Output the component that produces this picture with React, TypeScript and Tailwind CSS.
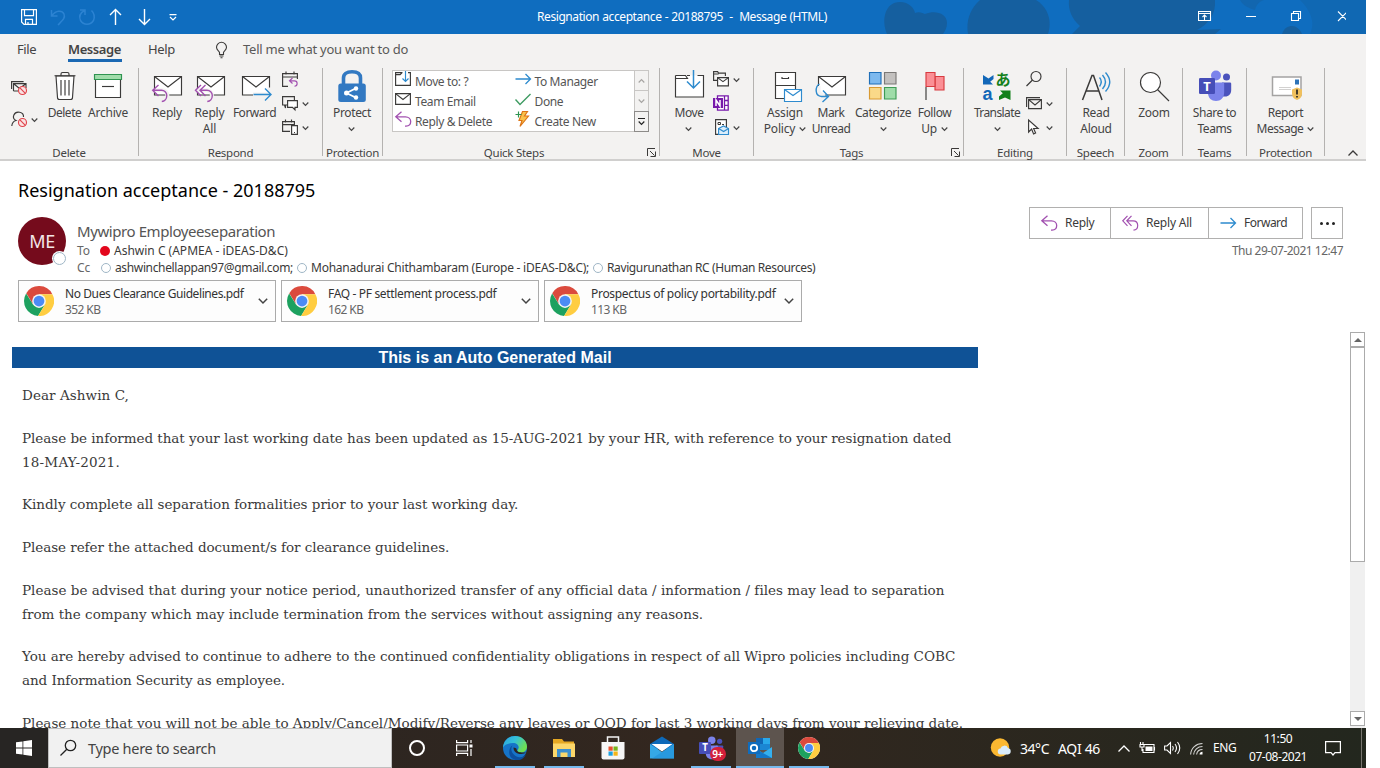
import type { ReactNode } from 'react';

const INK = '#3b3a39';
const BLUE = '#2e8bce';
const PURPLE = '#a251b0';

type IconProps = { children: ReactNode; size?: string; box?: string };

function Ico({ children, size = 'h-8 w-8', box = '0 0 32 32' }: IconProps) {
  return (
    <svg className={`block shrink-0 overflow-visible ${size}`} viewBox={box} fill="none" stroke={INK} strokeWidth="1.15">
      {children}
    </svg>
  );
}

function Chevron({ className = '' }: { className?: string }) {
  return (
    <svg className={`inline-block h-[4px] w-[7px] shrink-0 overflow-visible ${className}`} viewBox="0 0 7 4" fill="none" stroke="currentColor" strokeWidth="1.2">
      <path d="M.7.5 3.5 3.3 6.3.5" />
    </svg>
  );
}

function Group({ width, label, launcher, children }: { width: string; label: string; launcher?: boolean; children: ReactNode }) {
  return (
    <div className={`flex h-[88px] shrink-0 flex-col border-r border-[#b4b2b0] ${width}`}>
      <div className="flex h-[78px] shrink-0 items-start">{children}</div>
      <div className="flex h-[12px] shrink-0 items-center">
        <div className={`flex-1 whitespace-nowrap text-center text-[11.5px] leading-[13px] tracking-[-0.27px] ${launcher ? '-translate-x-px' : ''}`}>{label}</div>
        {launcher && (
          <svg className="mr-[3px] h-[9px] w-[9px] shrink-0" viewBox="0 0 9 9" fill="none" stroke={INK}>
            <path d="M.5 8V.5H8M3 3l4.500 4.500M8.500 3.500v5h-5" />
          </svg>
        )}
      </div>
    </div>
  );
}

function Big({ width, icon, lines, chevron, track = 'tracking-[-0.4px]' }: { width: string; icon: ReactNode; lines: string[]; chevron?: 'below' | 'inline'; track?: string }) {
  return (
    <div className={`flex shrink-0 flex-col items-center pt-[2px] ${width}`}>
      {icon}
      <div className={`mt-[3px] flex flex-col items-center whitespace-nowrap text-[12px] leading-4 ${track}`}>
        {lines.map((line, i) => (
          <div key={line} className="flex items-center">
            {line}
            {chevron === 'inline' && i === lines.length - 1 && <Chevron className="ml-[4px]" />}
          </div>
        ))}
        {chevron === 'below' && <Chevron className="mt-[6px]" />}
      </div>
    </div>
  );
}

const TrashIcon = () => (
  <Ico>
    <path fill="#fff" d="M7 6h18l-1.500 21.500a2 2 0 0 1-2 2h-11a2 2 0 0 1-2-2z" />
    <path d="M5.500 5.700h21M12 5.500V4a1.500 1.500 0 0 1 1.500-1.500h5A1.500 1.500 0 0 1 20 4v1.500M12 10v15.500M16 10v15.500M20 10v15.500" />
  </Ico>
);

const ArchiveIcon = () => (
  <Ico>
    <path fill="#fff" d="M3.500 9.500h25v18h-25z" />
    <path fill="#a0dcaa" stroke="#2f9350" d="M2.500 4.500h27v5h-27z" />
    <path d="M10 16.500h12" />
  </Ico>
);

const EnvelopeShape = () => (
  <>
    <path fill="#fff" d="M3.500 6.500h27v18.500h-27z" />
    <path d="m3.500 6.500 13.500 10.500L30.500 6.500" />
  </>
);

const ReplyIcon = () => (
  <Ico>
    <EnvelopeShape />
    <path stroke="#f3f2f1" strokeWidth="4" d="M1.800 20.200h9.500a5 5 0 0 1 5 5v1" />
    <path stroke={PURPLE} strokeWidth="1.400" d="m7.500 15-5.800 5.300L7.500 26M2 20.300h8.500a5.300 5.300 0 0 1 5.300 5.300c0 3.300-2.300 5.600-5 5.900" />
  </Ico>
);

const ReplyAllIcon = () => (
  <Ico>
    <EnvelopeShape />
    <path stroke="#f3f2f1" strokeWidth="4" d="M1.800 20.200h11a5 5 0 0 1 5 5v1" />
    <path stroke={PURPLE} strokeWidth="1.400" d="m7 15-5.500 5.300L7 26M11.500 15 6 20.300l5.500 5.700M6.300 20.300h6.700a5.300 5.300 0 0 1 5.300 5.300c0 3.300-2.300 5.600-5 5.900" />
  </Ico>
);

const ForwardIcon = () => (
  <Ico>
    <EnvelopeShape />
    <path stroke="#f3f2f1" strokeWidth="4" d="M14 24.500h16.500v-7" />
    <path stroke={BLUE} strokeWidth="1.400" d="M14.500 24.500h17.500M26 18.500l6 6-6 6" />
  </Ico>
);

const LockIcon = () => (
  <Ico>
    <path stroke="#3279c2" strokeWidth="3.600" d="M7.500 14V8c0-4 3-6.200 8.500-6.200S24.500 4 24.500 8v6" />
    <rect x="2.300" y="13.500" width="27.500" height="18.500" rx="2.500" fill="#3279c2" stroke="none" />
    <path stroke="#fff" strokeWidth="1.800" d="m19.500 18.500-9 4.500 9 4.500" />
    <g fill="#fff" stroke="none">
      <circle cx="20" cy="18.500" r="2.200" />
      <circle cx="10.500" cy="23" r="2.500" />
      <circle cx="20" cy="27.500" r="2.200" />
    </g>
  </Ico>
);

const MoveIcon = () => (
  <Ico>
    <path fill="#fff" stroke="none" d="M2.500 5.500h28v21.500h-28z" />
    <path d="M2.500 5.500V27h28V5.500h-6M2.500 5.500h10l2 3h-12M14 5.500h3" />
    <path stroke={BLUE} strokeWidth="1.500" d="M20.500 0v18M14 11.500l6.500 6.500 6.500-6.500" />
  </Ico>
);

const AssignIcon = () => (
  <Ico>
    <path fill="#fff" d="M6.500 2.500h20v26h-20z" />
    <path d="M6.500 15.500h20M13 7v1.500h6.500V7" />
    <path fill="#fff" stroke={BLUE} d="M15.500 19.500h17v12h-17z" />
    <path stroke={BLUE} d="m15.500 19.500 8.500 6 8.500-6" />
  </Ico>
);

const UnreadIcon = () => (
  <Ico>
    <EnvelopeShape />
    <path stroke="#f3f2f1" strokeWidth="4" d="M3.500 16v6.500l6 4" />
    <path stroke={BLUE} strokeWidth="1.400" d="M4.500 14C0 16.500-.5 26 6.500 26.500H13M8 20.500l5.500 6L7.500 32" />
  </Ico>
);

const CategorizeIcon = () => (
  <Ico>
    <path fill="#7db9ee" stroke="#1f6fb8" d="M2.500 2.500H14V14H2.500z" />
    <path fill="#c3c1bf" stroke="#7b7977" d="M17.500 2.500H29V14H17.500z" />
    <path fill="#fad989" stroke="#d99a32" d="M2.500 17.500H14V29H2.500z" />
    <path fill="#9fdca9" stroke="#3f9b55" d="M17.500 17.500H29V29H17.500z" />
  </Ico>
);

const FlagIcon = () => (
  <Ico>
    <path fill="#fb8f95" stroke="#d83b41" d="M16 6.500h9V20h-9z" />
    <path fill="#fb8f95" stroke="#d83b41" d="M7 2.500h9v14H7z" />
    <path d="M7 17v13" />
  </Ico>
);

const TranslateIcon = () => (
  <Ico>
    <g stroke="none">
      <path fill="#1267b8" d="M2 5v9.500h10L9.200 11.700l3.300-2.700V5L7.500 8.500z" />
      <path fill="#13801b" d="M29.500 30v-9.500h-10.500l2.800 2.800L18 26.500V30l6-2.500z" />
      <text x="14.500" y="15" fontSize="15" fontWeight="700" fill="#13801b" fontFamily="Noto Sans CJK JP, sans-serif">あ</text>
      <text x="1.500" y="30" fontSize="18" fontWeight="700" fill="#1267b8" fontFamily="Liberation Sans, sans-serif">a</text>
    </g>
  </Ico>
);

const ReadAloudIcon = () => (
  <Ico>
    <path strokeWidth="1.500" d="M2.500 30 12 5.500h1.500L22 30M6 21h12.500" />
    <path stroke={BLUE} strokeWidth="1.400" d="M19.500 7.500q3.500 4 0 9M22.500 5q6 7 0 14M25.500 2.500q8.500 9.500 0 19" />
  </Ico>
);

const ZoomIcon = () => (
  <Ico>
    <circle cx="12.500" cy="12.500" r="10" fill="#fff" />
    <path d="M19.500 19.500 31 31" />
  </Ico>
);

const TeamsArt = () => (
  <g stroke="none">
    <circle cx="27.500" cy="7" r="3.500" fill="#4b53bc" />
    <path fill="#4b53bc" d="M23 12.500h8a1.200 1.200 0 0 1 1.200 1.200V20c0 4-2.500 6.500-6 6.500h-3.200z" />
    <circle cx="17" cy="5.500" r="5" fill="#7b83eb" />
    <path fill="#7b83eb" d="M10 12.500h14a1.200 1.200 0 0 1 1.200 1.200V22c0 6-3.700 9-8.200 9s-8-3-8-8z" />
    <rect x="0" y="8" width="16" height="16" rx="1.200" fill="#464eb8" />
    <text x="8" y="20.500" textAnchor="middle" fontSize="13" fontWeight="700" fill="#fff" fontFamily="Noto Sans, sans-serif">T</text>
  </g>
);

const ReportIcon = () => (
  <Ico>
    <path fill="#fff" stroke="#a4a3a2" strokeWidth="1.500" d="M2.500 7h28.500v18.500H2.500z" />
    <path stroke="#d2d1d0" d="M9 17.500h12M9 19.500h12" />
    <path fill="#2d73b8" stroke="none" d="M25 9.500h4v5h-4z" />
    <path fill="#f0c05d" stroke="none" d="m27 17.500 5 2v4c0 3.500-2 5.500-5 6.500-3-1-5-3-5-6.500v-4z" />
    <path stroke="#1b1a19" strokeWidth="1.600" d="M27 19.500v5M27 26v1.600" />
  </Ico>
);

function Stop({ x, y }: { x: number; y: number }) {
  return (
    <g stroke="#e0434b">
      <circle cx={x} cy={y} r="4" fill="#f9e3e3" />
      <path d={`M${x - 2.8} ${y - 2.8}l5.600 5.600`} />
    </g>
  );
}

function ReplyGlyph({ className = 'h-4 w-4' }: { className?: string }) {
  return (
    <Ico size={className} box="0 0 16 16">
      <path stroke={PURPLE} strokeWidth="1.300" d="M6.500.800.800 5.800l5.700 5M1 5.800h9.500c3 0 5.200 2 5.200 4.700 0 2.500-2 4.500-4.700 4.700h-1" />
    </Ico>
  );
}

function ArrowRight({ className = 'h-4 w-4' }: { className?: string }) {
  return (
    <Ico size={className} box="0 0 16 16">
      <path stroke={BLUE} strokeWidth="1.300" d="M.5 8h15M10.500 3l5 5-5 5" />
    </Ico>
  );
}

function ChromeLogo({ className }: { className: string }) {
  return (
    <svg className={`shrink-0 ${className}`} viewBox="0 0 48 48">
      <circle cx="24" cy="24" r="24" fill="#fff" />
      <path fill="#db4a3d" d="M24 24V13h21.300A24 24 0 0 0 3.600 11.600L14.500 29.500z" />
      <path fill="#1da15f" d="M14.500 29.500 3.400 11.800A24 24 0 0 0 22.500 48L33.600 29.500 24 24z" />
      <path fill="#ffcd41" d="M33.600 29.500 22.500 48A24 24 0 0 0 45.400 13H24v11z" />
      <circle cx="24" cy="24" r="11" fill="#f4f4f4" />
      <circle cx="24" cy="24" r="8.600" fill="#4b8bf5" />
    </svg>
  );
}

function TitleBar() {
  return (
    <header className="relative flex h-[34px] shrink-0 items-center overflow-hidden bg-[#0f6dbf] text-white">
      <svg className="absolute right-0 top-0 h-[34px] w-[540px]" viewBox="826 0 540 34">
        <g fill="#155f9f">
          <path d="M887 34c-6-14-2-32 13-32 9 0 14 6 15 11 4-2 8 0 10 1 10-4 22-1 22 9 0 5-2 8-4 11z" />
          <path d="M968 34c-2-12 1-24 12-34h56c13 8 16 22 12 34z" />
          <path d="M1069 0h146c1 14-6 24-18 30l24-1-6 5H1072l8-8c-8-7-12-16-11-26z" />
          <path d="M1240 0h24c-6 2-8 6-9 10-6-2-12-4-15-10z" opacity=".5" />
          <path d="M1282 34c2-6 6-8 10-8s8 3 10 8z" />
          <path d="M1300 0h66v34h-56c6-12 0-24-10-34z" opacity=".35" />
        </g>
      </svg>
      <div className="relative flex w-[537px] items-center pl-[21px]">
        <svg className="h-4 w-4" viewBox="0 0 16 16" fill="none" stroke="white" strokeWidth="1.200">
          <path d="M.6.600h14.800v14.800H3L.6 13zM3.500.600v6h9v-6M4.500 15.400v-5h7v5M7 15v-2" />
        </svg>
        <svg className="ml-[14px] h-4 w-[14px] overflow-visible" viewBox="0 0 14 16" fill="none" stroke="#2c83d2" strokeWidth="1.500">
          <path d="M.5 1v6h6M1 6.500C5 1 11 1 13 5c1.500 4-1 6-6 11" />
        </svg>
        <svg className="ml-[14px] h-4 w-4 overflow-visible" viewBox="0 0 16 16" fill="none" stroke="#2c83d2" strokeWidth="1.500">
          <path d="M1 1h5v5M5.500 1.500C1 4 0 8 1.500 11.500c3 5 10 5 13 0 1.500-4 1-7-2-10" />
        </svg>
        <svg className="ml-[14px] h-[18px] w-[13px]" viewBox="0 0 13 18" fill="none" stroke="white" strokeWidth="1.400">
          <path d="M6.500 1.500V17M1 7l5.500-5.500L12 7" />
        </svg>
        <svg className="ml-[16px] h-[18px] w-[13px]" viewBox="0 0 13 18" fill="none" stroke="white" strokeWidth="1.400">
          <path d="M6.500 1v15.500M1 11l5.500 5.500L12 11" />
        </svg>
        <svg className="ml-[18px] h-[7px] w-[8px]" viewBox="0 0 8 7" fill="none" stroke="white" strokeWidth="1.200">
          <path d="M.5.700h7M1 3l3 3 3-3" />
        </svg>
      </div>
      <div className="relative -mt-px flex-1 whitespace-pre text-[12px] tracking-[-0.42px] [word-spacing:0.5px]">{'Resignation acceptance - 20188795  -  Message (HTML)'}</div>
      <svg className="relative mr-[20px] h-8 w-[148px]" viewBox="1198 0 148 32" fill="none" stroke="white" strokeWidth="1.100">
        <path d="M1198.500 10.500h12v9h-12zM1198.500 12.500h12M1204.500 19v-5M1202.500 16l2-2 2 2M1246 15.500h10M1291.500 12.500h7v7h-7zM1293.500 12v-1.500h7v7h-1.500M1338 10.500l9.500 9.500M1347.500 10.500l-9.500 9.500" />
      </svg>
    </header>
  );
}

function Tabs() {
  return (
    <nav className="flex h-[34px] items-start pt-[6px] text-[13px] leading-[18px] text-[#444]">
      <div className="ml-[17px] w-[51px] tracking-[-0.4px]">File</div>
      <div className="w-[54px] whitespace-nowrap border-b-[3px] border-[#1a68b3] pb-px font-semibold tracking-[-0.41px]">Message</div>
      <div className="ml-[26px] w-[68px] tracking-[-0.33px]">Help</div>
      <svg className="mt-[2px] h-4 w-[11px] overflow-visible" viewBox="0 0 11 16" fill="none" stroke={INK} strokeWidth="1.100">
        <path d="M3.500 12.500v-2C3 9 .5 8 .5 5.300a5 5 0 0 1 10 0c0 2.700-2.500 3.700-3 5.200v2zM3.500 14h4M4.500 15.800h2" />
      </svg>
      <div className="ml-[16px] text-[#5a5958] tracking-[-0.24px]">Tell me what you want to do</div>
    </nav>
  );
}

function QuickSteps() {
  const left: [ReactNode, string][] = [
    [
      <Ico size="h-4 w-4" box="0 0 16 16">
        <path fill="#fff" stroke="none" d="M.6 1.600h14.800v12.800H.6z" />
        <path d="M7.500 1.600H.6v12.800h14.800V1.600H13M.6 3.600h4.500l2-2" />
        <path stroke={BLUE} d="M10.500 0v10.500M7.500 7.500l3 3 3-3" />
      </Ico>,
      'Move to: ?',
    ],
    [
      <Ico size="h-4 w-4" box="0 0 16 16">
        <path fill="#fff" d="M.6 2.600h14.800v10.800H.6z" />
        <path d="m.6 2.600 7.400 5.800 7.400-5.800" />
      </Ico>,
      'Team Email',
    ],
    [<ReplyGlyph />, 'Reply & Delete'],
  ];
  const right: [ReactNode, string][] = [
    [<ArrowRight />, 'To Manager'],
    [
      <Ico size="h-4 w-4" box="0 0 16 16">
        <path stroke="#3f9b62" strokeWidth="1.400" d="m.5 8.500 4.500 5L15.500 3" />
      </Ico>,
      'Done',
    ],
    [
      <Ico size="h-4 w-4" box="0 0 16 16">
        <path fill="#f9c24b" stroke="#dd7416" d="M7.500.5h5L9.500 5h4L5 15.500l2-6H4z" />
        <path stroke="#2f9350" d="M.5 3.500h6M3.500.5v6" />
      </Ico>,
      'Create New',
    ],
  ];
  const column = (rows: [ReactNode, string][], width: string) => (
    <div className={`flex flex-col ${width}`}>
      {rows.map(([icon, label]) => (
        <div key={label} className="flex h-5 items-center">
          <div className="-mt-[4px]">{icon}</div>
          <span className="ml-[4px] whitespace-nowrap pt-px text-[12px] leading-4 tracking-[-0.38px] text-[#555]">{label}</span>
        </div>
      ))}
    </div>
  );
  return (
    <div className="ml-[9px] mt-[2px] flex h-[62px] w-[257px] border border-[#c8c6c4] bg-white pl-[2px]">
      {column(left, 'w-[120px]')}
      {column(right, 'w-[120px]')}
      <div className="-my-px -mr-px ml-auto flex w-[15px] flex-col text-[#a6a4a2]">
        <div className="flex h-[21px] items-center justify-center border border-[#c8c6c4] bg-[#f3f2f1]">
          <Chevron className="rotate-180" />
        </div>
        <div className="flex h-[20px] items-center justify-center border-x border-[#c8c6c4] bg-[#f3f2f1]">
          <Chevron />
        </div>
        <div className="flex h-[21px] flex-col items-center justify-center gap-[2px] border border-[#8d8b89] bg-[#f3f2f1] text-[#222]">
          <div className="h-px w-[7px] bg-[#222]" />
          <Chevron />
        </div>
      </div>
    </div>
  );
}

function SmallRow({ icon, chevron = true }: { icon: ReactNode; chevron?: boolean }) {
  return (
    <div className="flex h-6 items-center">
      {icon}
      {chevron && <Chevron className="ml-[4px] mt-[1px]" />}
    </div>
  );
}

function Ribbon() {
  return (
    <div className="flex h-[93px] border-b-2 border-[#d0cfce] text-[#444]">
      <Group width="w-[139px]" label="Delete">
        <div className="flex w-[42px] flex-col gap-[7px] pl-[11px] pt-[8px]">
          <SmallRow
            chevron={false}
            icon={
              <Ico size="h-4 w-4" box="0 0 16 16">
                <path d="M.6 9V1.600h12M2.500 11V3.600h12.500V8M2.500 11H7M3 4l5.500 4.500L14.500 4" />
                <Stop x={11.5} y={10.5} />
              </Ico>
            }
          />
          <SmallRow
            icon={
              <Ico size="h-4 w-4" box="0 0 16 16">
                <path d="M.8 15c.3-3 2-5 4.200-5.500A5 4.500 0 1 1 12.500 6" />
                <Stop x={11.5} y={11.5} />
              </Ico>
            }
          />
        </div>
        <Big width="w-[45px]" icon={<TrashIcon />} lines={['Delete']} track="tracking-[-0.5px]" />
        <Big width="w-[42px]" icon={<ArchiveIcon />} lines={['Archive']} track="tracking-[-0.22px]" />
      </Group>

      <Group width="w-[184px]" label="Respond">
        <Big width="ml-[7px] w-[42px]" icon={<ReplyIcon />} lines={['Reply']} track="tracking-[-0.17px]" />
        <Big width="w-[43px]" icon={<ReplyAllIcon />} lines={['Reply', 'All']} track="tracking-[-0.17px]" />
        <Big width="w-[47px]" icon={<ForwardIcon />} lines={['Forward']} track="tracking-[-0.5px]" />
        <div className="-mt-px ml-[4px] flex flex-col">
          <SmallRow
            chevron={false}
            icon={
              <Ico size="h-4 w-4" box="0 0 16 16">
                <path d="M6 15.400H.6V2.600h14.800V8M.6 6h14.800M4 .500v3M12 .500v3" />
                <path stroke={PURPLE} d="m10.500 7-3 2.800 3 2.700M7.500 9.800h5c3.500 0 3.500 5.400 0 5.400" />
              </Ico>
            }
          />
          <SmallRow
            icon={
              <Ico size="h-4 w-4" box="0 0 16 16">
                <path d="M5 10H3.500v3l-1-3H.6V1.600h11.800V5" />
                <path fill="#fff" d="M5.600 5.600h9.800v6.800H13v2.500l-2.500-2.500H5.600z" />
              </Ico>
            }
          />
          <SmallRow
            icon={
              <Ico size="h-4 w-4" box="0 0 16 16">
                <path d="M8 12.400H.6V2.600h11.800V6M.6 5.600h11.800M3.500.500v3M9.500.500v3" />
                <path fill="#fff" d="M9.600 6.600h5.800v8.800H9.600zM12 13.500h1" />
              </Ico>
            }
          />
        </div>
      </Group>

      <Group width="w-[60px]" label="Protection">
        <Big width="w-[58px]" icon={<LockIcon />} lines={['Protect']} chevron="below" track="tracking-[-0.35px]" />
      </Group>

      <Group width="w-[277px]" label="Quick Steps" launcher>
        <QuickSteps />
      </Group>

      <Group width="w-[94px]" label="Move">
        <Big width="ml-[10px] w-[38px]" icon={<MoveIcon />} lines={['Move']} chevron="below" />
        <div className="-mt-px ml-[5px] flex flex-col">
          <SmallRow
            icon={
              <Ico size="h-4 w-4" box="0 0 16 16">
                <path d="M4 9.400H.6V.600h4l1 1.500h6.800V5M.6 3h5" />
                <path fill="#fff" d="M4.600 6.600h10.800v8.300H4.600z" />
                <path d="m4.600 6.600 5.400 4 5.400-4" />
              </Ico>
            }
          />
          <SmallRow
            chevron={false}
            icon={
              <Ico size="h-4 w-4" box="0 0 16 16">
                <path fill="#fff" stroke="#7719aa" strokeWidth="1.300" d="M4.500.800h10.700v14.400H4.500zM11.500 .800v14.400M11.500 5.500h3.500M11.500 10.300h3.500" />
                <path fill="#7719aa" stroke="none" d="M0 3h10v10H0z" />
                <path stroke="#fff" strokeWidth="1.500" d="M3 11V5l4 6V5" />
              </Ico>
            }
          />
          <SmallRow
            icon={
              <Ico size="h-4 w-4" box="0 0 16 16">
                <path fill="#fff" d="M2.600.600h10.800v14.800H2.600z" />
                <path d="M5 5.500h2.500v-2H5zM9 5.500h2" strokeWidth="1" />
                <path fill="#dceefb" stroke={BLUE} d="M5.600 9.500 10.500 7l5 2.500v6H5.600z" />
                <path stroke={BLUE} d="m5.600 9.500 5 3 5-3" />
              </Ico>
            }
          />
        </div>
      </Group>

      <Group width="w-[210px]" label="Tags" launcher>
        <Big width="ml-[10px] w-[42px]" icon={<AssignIcon />} lines={['Assign', 'Policy']} chevron="inline" track="tracking-[-0.2px]" />
        <Big width="ml-[5px] w-[40px]" icon={<UnreadIcon />} lines={['Mark', 'Unread']} track="tracking-[-0.55px]" />
        <Big width="ml-[2px] w-[60px]" icon={<CategorizeIcon />} lines={['Categorize']} chevron="below" track="tracking-[-0.45px]" />
        <Big width="ml-[2px] w-[39px]" icon={<FlagIcon />} lines={['Follow', 'Up']} chevron="inline" />
      </Group>

      <Group width="w-[103px]" label="Editing">
        <Big width="ml-[8px] w-[50px]" icon={<TranslateIcon />} lines={['Translate']} chevron="below" track="tracking-[-0.6px]" />
        <div className="-mt-px ml-[4px] flex flex-col">
          <SmallRow
            chevron={false}
            icon={
              <Ico size="h-4 w-4" box="0 0 16 16">
                <circle cx="10" cy="5.500" r="5" />
                <path d="M6.500 9 .5 15" />
              </Ico>
            }
          />
          <SmallRow
            icon={
              <Ico size="h-4 w-4" box="0 0 16 16">
                <path d="M.6 12V2.600H14M2.600 4.600h12.800v9H2.600zM2.600 4.600 9 10l6.400-5.400" />
              </Ico>
            }
          />
          <SmallRow
            icon={
              <Ico size="h-4 w-4" box="0 0 16 16">
                <path fill="#fff" d="M2.600 1v12l3-3 2 5 2-1-2-4.500h4.500z" />
              </Ico>
            }
          />
        </div>
      </Group>

      <Group width="w-[58px]" label="Speech">
        <Big width="w-[58px]" icon={<ReadAloudIcon />} lines={['Read', 'Aloud']} track="tracking-[-0.3px]" />
      </Group>
      <Group width="w-[58px]" label="Zoom">
        <Big width="w-[58px]" icon={<ZoomIcon />} lines={['Zoom']} track="tracking-[-0.3px]" />
      </Group>
      <Group width="w-[64px]" label="Teams">
        <Big width="w-[63px]" icon={<Ico><TeamsArt /></Ico>} lines={['Share to', 'Teams']} track="tracking-[-0.45px]" />
      </Group>
      <Group width="w-[78px]" label="Protection">
        <Big width="w-[77px]" icon={<ReportIcon />} lines={['Report', 'Message']} chevron="inline" track="tracking-[-0.45px]" />
      </Group>
      <svg className="ml-[23px] mt-[82px] h-[6px] w-[10px] overflow-visible" viewBox="0 0 10 6" fill="none" stroke={INK} strokeWidth="1.300">
        <path d="M.5 5.500 5 1l4.500 4.500" />
      </svg>
    </div>
  );
}

const Presence = () => <span className="inline-block h-[10px] w-[10px] shrink-0 rounded-full border border-[#9fb6c6] bg-white" />;

function MessageHeader() {
  return (
    <section className="h-[171px] shrink-0 bg-white">
      <h1 className="pl-[18px] pt-[17px] text-[18px] leading-6 text-black">Resignation acceptance - 20188795</h1>
      <div className="flex h-[78px] justify-between pl-[18px] pr-[23px]">
        <div className="flex">
          <div className="relative mt-[15px] flex h-12 w-12 items-center justify-center rounded-full bg-[#750b1c] text-[18px] tracking-[-0.5px] text-[#f3e6e8]">
            ME
            <span className="absolute right-0 bottom-0 h-[13px] w-[13px] rounded-full border border-[#9fb6c6] bg-white ring-1 ring-white" />
          </div>
          <div className="ml-[11px] mt-[19px] whitespace-nowrap text-[12px] text-[#3b3a39]">
            <div className="mb-px text-[15px] leading-5 tracking-[-0.42px] text-[#555]">Mywipro Employeeseparation</div>
            <div className="flex h-[17px] items-center">
              <span className="w-[23px] text-[#666]">To</span>
              <span className="mr-[4px] h-[10px] w-[10px] rounded-full bg-[#e3061c]" />
              <span>Ashwin C (APMEA - iDEAS-D&amp;C)</span>
            </div>
            <div className="flex h-[17px] items-center">
              <span className="w-[24px] text-[#666]">Cc</span>
              <Presence />
              <span className="ml-[4px] w-[182px] tracking-[-0.36px]">ashwinchellappan97@gmail.com;</span>
              <Presence />
              <span className="ml-[4px] w-[282px] tracking-[-0.24px]">Mohanadurai Chithambaram (Europe - iDEAS-D&amp;C);</span>
              <Presence />
              <span className="ml-[4px] tracking-[-0.38px]">Ravigurunathan RC (Human Resources)</span>
            </div>
          </div>
        </div>
        <div className="flex flex-col items-end pt-[5px] text-[12px] text-[#3b3a39]">
          <div className="flex h-8 gap-[8px]">
            <div className="flex border border-[#b1b0af]">
              <div className="flex w-[81px] items-center border-r border-[#b1b0af] pl-[11px]">
                <ReplyGlyph />
                <span className="ml-[8px] tracking-[-0.3px]">Reply</span>
              </div>
              <div className="flex w-[98px] items-center border-r border-[#b1b0af] pl-[11px]">
                <Ico size="h-4 w-4" box="0 0 16 16">
                  <path stroke={PURPLE} strokeWidth="1.200" d="M5.500.800.800 5.800l4.700 5M9.500.800 4.800 5.800l4.700 5M5 5.800h6c3 0 4.700 2 4.700 4.700 0 2.500-1.500 4.500-4.200 4.700" />
                </Ico>
                <span className="ml-[8px] whitespace-nowrap tracking-[-0.2px]">Reply All</span>
              </div>
              <div className="flex w-[93px] items-center pl-[11px]">
                <ArrowRight />
                <span className="ml-[8px] tracking-[-0.5px]">Forward</span>
              </div>
            </div>
            <div className="flex w-8 items-center justify-center gap-[3px] border border-[#b1b0af]">
              <span className="h-[3px] w-[3px] rounded-full bg-[#222]" />
              <span className="h-[3px] w-[3px] rounded-full bg-[#222]" />
              <span className="h-[3px] w-[3px] rounded-full bg-[#222]" />
            </div>
          </div>
          <div className="mt-[4px] leading-4 tracking-[-0.5px] text-[#666]">Thu 29-07-2021 12:47</div>
        </div>
      </div>
      <div className="flex gap-[5px] pl-[18px]">
        <Attachment name="No Dues Clearance Guidelines.pdf" size="352 KB" track="tracking-[-0.41px]" />
        <Attachment name="FAQ - PF settlement process.pdf" size="162 KB" track="tracking-[-0.34px]" />
        <Attachment name="Prospectus of policy portability.pdf" size="113 KB" track="tracking-[-0.3px]" />
      </div>
    </section>
  );
}

function Attachment({ name, size, track }: { name: string; size: string; track: string }) {
  return (
    <div className="flex h-[42px] w-[258px] items-center border border-[#ababab] bg-[#fdfdfd] pl-[5px] text-[12px] leading-4">
      <ChromeLogo className="h-[30px] w-[30px]" />
      <div className="ml-[11px] w-[193px] whitespace-nowrap pt-[2px]">
        <div className={`text-[#333] ${track}`}>{name}</div>
        <div className="tracking-[-0.6px] text-[#666]">{size}</div>
      </div>
      <svg className="h-[6px] w-[10px] overflow-visible" viewBox="0 0 10 6" fill="none" stroke="#444" strokeWidth="1.500">
        <path d="m.8.800 4.200 4.200L9.200.800" />
      </svg>
    </div>
  );
}

const PARAGRAPHS: { text: string; track: string }[][] = [
  [{ text: 'Dear Ashwin C,', track: 'tracking-[0.07px]' }],
  [
    { text: 'Please be informed that your last working date has been updated as 15-AUG-2021 by your HR, with reference to your resignation dated', track: 'tracking-[-0.033px]' },
    { text: '18-MAY-2021.', track: 'tracking-[0.21px]' },
  ],
  [{ text: 'Kindly complete all separation formalities prior to your last working day.', track: 'tracking-[-0.03px]' }],
  [{ text: 'Please refer the attached document/s for clearance guidelines.', track: 'tracking-[-0.055px]' }],
  [
    { text: 'Please be advised that during your notice period, unauthorized transfer of any official data / information / files may lead to separation', track: 'tracking-[0.022px]' },
    { text: 'from the company which may include termination from the services without assigning any reasons.', track: 'tracking-[0px]' },
  ],
  [
    { text: 'You are hereby advised to continue to adhere to the continued confidentiality obligations in respect of all Wipro policies including COBC', track: 'tracking-[-0.032px]' },
    { text: 'and Information Security as employee.', track: 'tracking-[-0.07px]' },
  ],
  [{ text: 'Please note that you will not be able to Apply/Cancel/Modify/Reverse any leaves or OOD for last 3 working days from your relieving date.', track: 'tracking-[-0.009px]' }],
];

function Body() {
  return (
    <section className="flex min-h-0 flex-1 overflow-hidden bg-white">
      <div className="w-[978px] pl-[12px] pt-[15px]">
        <div className="h-[21px] bg-[#0f5296] text-center font-['Liberation_Sans'] text-[16px] font-bold leading-[21px] text-white">This is an Auto Generated Mail</div>
        <div className="flex flex-col gap-[18.7px] pl-[10px] pt-[14.9px] font-['DejaVu_Serif'] text-[13.5px] leading-6 text-[#3a3a3a]">
          {PARAGRAPHS.map((lines) => (
            <div key={lines[0].text}>
              {lines.map((line) => (
                <div key={line.text} className={`whitespace-nowrap ${line.track}`}>{line.text}</div>
              ))}
            </div>
          ))}
        </div>
      </div>
      <div className="ml-auto mr-px flex w-[15px] flex-col bg-[#f0f0f0]">
        <div className="flex h-[15px] shrink-0 items-center justify-center border border-[#ababab] bg-white">
          <div className="h-0 w-0 border-x-[4px] border-b-[4px] border-x-transparent border-b-[#666]" />
        </div>
        <div className="h-[215px] shrink-0 border border-[#ababab] bg-white" />
        <div className="mb-[2px] mt-auto flex h-[15px] shrink-0 items-center justify-center border border-[#ababab] bg-white">
          <div className="h-0 w-0 border-x-[4px] border-t-[4px] border-x-transparent border-t-[#666]" />
        </div>
      </div>
    </section>
  );
}

function TaskButton({ children, open, active }: { children: ReactNode; open?: boolean; active?: boolean }) {
  return (
    <div className="flex h-10 w-[49px] shrink-0 flex-col items-center">
      <div className={`flex h-[38px] w-12 items-center justify-center pt-[2px] ${active ? 'bg-[#5d544e]' : ''}`}>{children}</div>
      {open && <div className={`h-[2px] bg-[#76b9ed] ${active ? 'w-12' : 'w-10'}`} />}
    </div>
  );
}

function Taskbar() {
  return (
    <footer className="flex h-10 shrink-0 items-center bg-linear-to-r from-[#262422] via-[#33271f] to-[#23271e] text-white">
      <div className="flex h-10 w-12 items-center justify-center bg-[#272523]">
        <svg className="h-4 w-4" viewBox="0 0 16 16" fill="white">
          <path d="M0 2.300 6.500 1.400v6.200H0zM7.300 1.300 16 0v7.600H7.300zM0 8.400h6.500v6.200L0 13.700zM7.300 8.400H16V16l-8.700-1.300z" />
        </svg>
      </div>
      <div className="flex h-10 w-[344px] items-center border border-[#bfbfbf] bg-[#f1f1f1] pl-[11px] text-[#444]">
        <svg className="h-4 w-4 overflow-visible" viewBox="0 0 16 16" fill="none" stroke="#222" strokeWidth="1.300">
          <circle cx="10.500" cy="5.500" r="5.200" />
          <path d="M6.800 9.300.5 15.500" />
        </svg>
        <span className="ml-[12px] mt-px text-[14.5px] tracking-[-0.29px]">Type here to search</span>
      </div>
      <TaskButton>
        <div className="h-4 w-4 rounded-full border-[2.5px] border-white" />
      </TaskButton>
      <TaskButton>
        <svg className="-ml-[2px] h-4 w-[17px]" viewBox="0 0 17 16" fill="none" stroke="white" strokeWidth="1.200">
          <path d="M.6 0v2.600h11V0M.6 5h11v6H.6zM.6 16v-2.600h11V16M15 0v3M15 9v7" />
          <path fill="white" stroke="none" d="M13.500 4.500h3v3h-3z" />
        </svg>
      </TaskButton>
      <TaskButton open>
        <svg className="h-6 w-6" viewBox="0 0 24 24">
          <defs>
            <linearGradient id="edgeTop" x1="0" x2="1" y1="0" y2=".5">
              <stop offset="0" stopColor="#2a9fe0" />
              <stop offset=".5" stopColor="#35c1d8" />
              <stop offset="1" stopColor="#6ee052" />
            </linearGradient>
          </defs>
          <circle cx="12" cy="12" r="12" fill="#1674c8" />
          <path fill="url(#edgeTop)" d="M0 11.500C.8 4 6 0 12 0c7 0 12 5 12 10.500 0 4-3 6-6 6-3.500 0-4.500-1.500-3-3 2-3-.5-6.500-5-6.500C5 7 1.500 9 0 11.500z" />
          <path fill="#0c4f9e" d="M9.500 9.500c-3 4 0 10 5.500 11.500 3.500 1 6-.5 8-3-3 8-12 7-15 3.500S6 11 9.500 9.500z" />
          <path fill="#2b2422" d="M10.500 11.500c0 4 3 6.500 7.500 6.500 2.500 0 4-.8 5-1.500-2 0-8 .5-9-2-.6-1.600 0-2.500-3.500-3z" />
        </svg>
      </TaskButton>
      <TaskButton open>
        <svg className="h-[20px] w-[22px]" viewBox="0 0 22 20">
          <path fill="#e5a823" d="M0 1h9l2 2.500h10V6H0z" />
          <path fill="#fcd76a" d="M0 5.500h22V19H0z" />
          <path fill="#3d8fce" d="M4 11h14v8h-3.500v-4.500h-7V19H4z" />
        </svg>
      </TaskButton>
      <TaskButton>
        <svg className="h-6 w-6" viewBox="0 0 24 24">
          <path fill="none" stroke="#f3f3f3" strokeWidth="1.500" d="M6.500 7V1h11v6" />
          <path fill="#f6f6f6" d="M.5 6h23v15.500a2 2 0 0 1-2 2h-19a2 2 0 0 1-2-2z" />
          <path fill="#e8502f" d="M7.500 10.500h4.200v4.200H7.500z" />
          <path fill="#79b51c" d="M12.500 10.500h4.200v4.200h-4.200z" />
          <path fill="#1aa2e4" d="M7.500 15.500h4.200v4.200H7.500z" />
          <path fill="#f4b61a" d="M12.500 15.500h4.200v4.200h-4.200z" />
        </svg>
      </TaskButton>
      <TaskButton>
        <svg className="h-6 w-6" viewBox="0 0 24 24">
          <path fill="#0e69b8" d="M0 8 12 .5 24 8v5H0z" />
          <path fill="#35a8e6" d="M0 8v14.500h24V8L12 16z" />
          <path fill="#fff" d="M1.500 8h21L12 15.500z" />
          <path fill="#1f8fd8" d="M24 8v14.500H2z" opacity=".6" />
        </svg>
      </TaskButton>
      <TaskButton open>
        <div className="relative h-6 w-6">
          <svg className="h-6 w-6 overflow-visible" viewBox="0 0 32 32"><TeamsArt /></svg>
          <span className="absolute -right-[3px] -bottom-px flex h-[14px] w-[16px] items-center justify-center rounded-full bg-[#d3203a] text-[10px] font-semibold leading-none tracking-[-0.5px]">9+</span>
        </div>
      </TaskButton>
      <TaskButton open active>
        <svg className="h-6 w-6" viewBox="0 0 24 24">
          <path fill="#1066b5" d="M8 2h14v11H8z" />
          <path fill="#29a8ea" d="M15 2h7v6h-7z" />
          <path fill="#1b86d3" d="M8 8h14v6H8z" />
          <path fill="#35b0ee" d="m8 13 7 4 9-6v11H8z" />
          <path fill="#1478c8" d="m8 13 16 9H8z" />
          <path fill="#0f6cbd" d="M0 6h12v12H0z" />
          <circle cx="6" cy="12" r="3.200" fill="none" stroke="#fff" strokeWidth="1.800" />
        </svg>
      </TaskButton>
      <TaskButton open>
        <ChromeLogo className="h-[22px] w-[22px]" />
      </TaskButton>
      <div className="ml-auto flex h-10 items-center whitespace-nowrap text-[14px]">
        <svg className="h-5 w-5 overflow-visible" viewBox="0 0 20 20">
          <circle cx="10" cy="9.500" r="9.200" fill="#fbb831" />
          <path fill="#d9ecfb" d="M11 16.500a3 3 0 0 1-.5-6 4 4 0 0 1 7.500-.5 3.300 3.300 0 0 1 0 6.500z" />
        </svg>
        <span className="ml-[10px] w-[38px] tracking-[-0.46px]">34°C</span>
        <span className="w-[60px] tracking-[-0.33px]">AQI 46</span>
        <svg className="h-[7px] w-[12px]" viewBox="0 0 12 7" fill="none" stroke="white" strokeWidth="1.300">
          <path d="M.5 6.500 6 1l5.500 5.500" />
        </svg>
        <svg className="ml-[9px] h-[12px] w-[17px]" viewBox="0 0 17 12" fill="none" stroke="white" strokeWidth="1.100">
          <path d="M5.500 2.500H15v8H4V7M15.500 5v3.500M1.500 0v2.500M4 0v2.500M.5 2.500H5V5H1v-2.500M3 5v4" />
          <path fill="white" stroke="none" d="M6.500 4.500h7v4.500h-7z" />
        </svg>
        <svg className="ml-[8px] h-[14px] w-[17px]" viewBox="0 0 17 14" fill="none" stroke="white" strokeWidth="1.100">
          <path d="M.6 5v4h2.400l3.500 3.500v-11L3 5zM8.500 5q1.500 2 0 4.500M11 3q3 4 0 8M13.500 1q4.500 6 0 12" />
        </svg>
        <svg className="ml-[9px] h-[13px] w-[13px]" viewBox="0 0 13 13" fill="none" stroke="white" strokeWidth="1.100">
          <path d="M.6 12.500C1 6 6 1.500 12.500 1.500M3.600 12.500c.4-4.500 4-8 8.900-8M6.600 12.500c.4-2.800 2.600-5 5.900-5" opacity=".8" />
          <path fill="white" stroke="none" d="M9.500 12.500c0-1.500 1.200-2.700 3-2.700v2.700z" />
        </svg>
        <span className="ml-[10px] w-[36px] text-[12px] tracking-[-0.45px]">ENG</span>
        <div className="flex w-[58px] flex-col items-center text-[12px] leading-[18px] tracking-[-0.46px]">
          <span>11:50</span>
          <span>07-08-2021</span>
        </div>
        <svg className="ml-[18px] h-4 w-4" viewBox="0 0 16 16" fill="none" stroke="white" strokeWidth="1.200">
          <path d="M.6 1.600h14.800v11H10L8 15l-2-2.400H.6z" />
        </svg>
        <div className="ml-[20px] mr-[4px] h-10 w-px bg-[#77756f]" />
      </div>
    </footer>
  );
}

export default function App() {
  return (
    <div className="h-[768px] w-[1380px] overflow-hidden bg-white font-['Noto_Sans',sans-serif]">
      <div className="flex h-full w-[1366px] flex-col">
        <TitleBar />
        <div className="h-[127px] shrink-0 bg-[#f3f2f1]">
          <Tabs />
          <Ribbon />
        </div>
        <MessageHeader />
        <Body />
        <Taskbar />
      </div>
    </div>
  );
}
